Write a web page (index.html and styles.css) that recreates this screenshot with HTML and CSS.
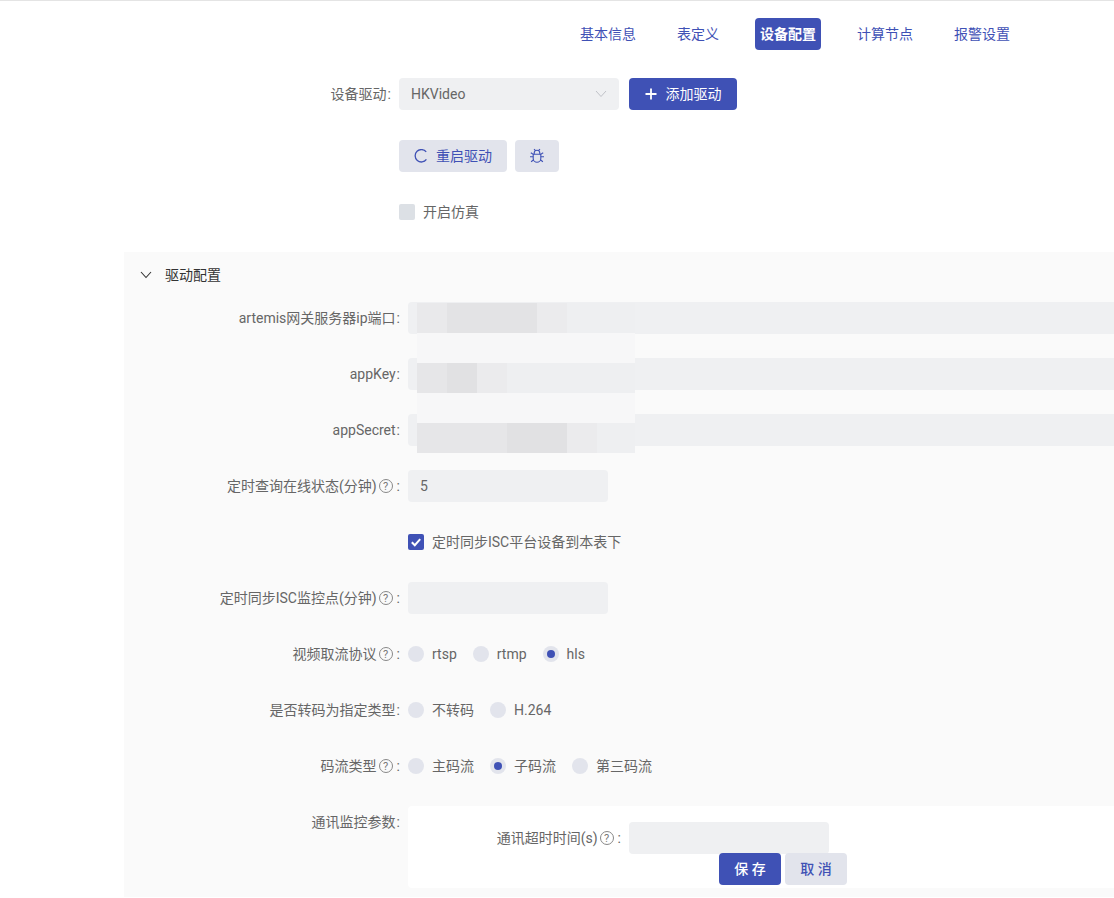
FILE: index.html
```html
<!DOCTYPE html>
<html lang="zh-CN">
<head>
<meta charset="utf-8">
<title>设备配置</title>
<link rel="stylesheet" href="styles.css">
</head>
<body>
<div class="page">
  <nav class="tabs">
    <a class="tab">基本信息</a>
    <a class="tab">表定义</a>
    <a class="tab active">设备配置</a>
    <a class="tab">计算节点</a>
    <a class="tab">报警设置</a>
  </nav>

  <form class="top-form">
    <div class="row row-first">
      <label class="label">设备驱动<span class="colon-plain">:</span></label>
      <div class="control">
        <div class="select">
          <span>HKVideo</span>
          <svg class="select-arrow" viewBox="0 0 12 8" width="12" height="8"><path d="M1 1l5 5.5L11 1" fill="none" stroke="#c0c2c8" stroke-width="1"/></svg>
        </div>
        <button type="button" class="btn btn-primary btn-add">
          <svg viewBox="0 0 12 12" width="12" height="12"><path d="M6 .5v11M.5 6h11" stroke="#fff" stroke-width="1.8" fill="none"/></svg>
          <span>添加驱动</span>
        </button>
      </div>
    </div>
    <div class="row">
      <span class="label"></span>
      <div class="control control-tight">
        <button type="button" class="btn btn-light btn-restart">
          <svg viewBox="0 0 14 14" width="14" height="14"><path d="M12.2 2.9A6.2 6.2 0 1 0 12.4 10.4" fill="none" stroke="#3f51b5" stroke-width="1.3"/></svg>
          <span>重启驱动</span>
        </button>
        <button type="button" class="btn btn-light btn-bug">
          <svg viewBox="0 0 16 16" width="16" height="16" fill="none" stroke="#3f51b5" stroke-width="1.1"><path d="M4.2 6.2h7.6v4.2a3.8 3.8 0 0 1-7.6 0z"/><path d="M5.2 6.2V5a2.8 2.8 0 0 1 5.6 0v1.2"/><path d="M5 1.2l1.6 1.5M11 1.2L9.4 2.7M4.2 8.8H1M11.8 8.8H15M4.4 6.4L1.8 4.8M11.6 6.4l2.6-1.6M4.7 11.8l-2.6 2M11.3 11.8l2.6 2"/></svg>
        </button>
      </div>
    </div>
    <div class="row">
      <span class="label"></span>
      <div class="control">
        <span class="check"></span>
        <span class="check-text">开启仿真</span>
      </div>
    </div>
  </form>

  <section class="panel">
    <header class="panel-head">
      <svg viewBox="0 0 12 8" width="12" height="8"><path d="M1 1l5 5.5L11 1" fill="none" stroke="#333" stroke-width="1.1"/></svg>
      <span>驱动配置</span>
    </header>

    <div class="mosaic" aria-hidden="true">
      <div class="m-row"><i class="c w30 s2"></i><i class="c w90 s4"></i><i class="c w30 s1"></i><i class="c w68 s0"></i></div>
      <div class="m-row m-pale"></div>
      <div class="m-row"><i class="c w30 s3"></i><i class="c w30 s5"></i><i class="c w30 s1"></i><i class="c w128 s0"></i></div>
      <div class="m-row m-pale"></div>
      <div class="m-row"><i class="c w90 s3"></i><i class="c w60 s5"></i><i class="c w30 s1"></i><i class="c w38 s0"></i></div>
    </div>

    <div class="row">
      <label class="label">artemis网关服务器ip端口<span class="colon-plain">:</span></label>
      <div class="control"><div class="input input-full"></div></div>
    </div>
    <div class="row">
      <label class="label">appKey<span class="colon-plain">:</span></label>
      <div class="control"><div class="input input-full"></div></div>
    </div>
    <div class="row">
      <label class="label">appSecret<span class="colon-plain">:</span></label>
      <div class="control"><div class="input input-full"></div></div>
    </div>
    <div class="row">
      <label class="label">定时查询在线状态(分钟)<span class="help">?</span><span class="colon">:</span></label>
      <div class="control"><div class="input">5</div></div>
    </div>
    <div class="row">
      <span class="label"></span>
      <div class="control">
        <span class="check checked">
          <svg viewBox="0 0 16 16" width="16" height="16"><path d="M3.8 8.2l3 3 5.4-6" fill="none" stroke="#fff" stroke-width="2"/></svg>
        </span>
        <span class="check-text">定时同步ISC平台设备到本表下</span>
      </div>
    </div>
    <div class="row">
      <label class="label">定时同步ISC监控点(分钟)<span class="help">?</span><span class="colon">:</span></label>
      <div class="control"><div class="input"></div></div>
    </div>
    <div class="row">
      <label class="label">视频取流协议<span class="help">?</span><span class="colon">:</span></label>
      <div class="control radios">
        <span class="radio-item"><span class="radio"></span>rtsp</span>
        <span class="radio-item"><span class="radio"></span>rtmp</span>
        <span class="radio-item"><span class="radio on"></span>hls</span>
      </div>
    </div>
    <div class="row">
      <label class="label">是否转码为指定类型<span class="colon-plain">:</span></label>
      <div class="control radios">
        <span class="radio-item"><span class="radio"></span>不转码</span>
        <span class="radio-item"><span class="radio"></span>H.264</span>
      </div>
    </div>
    <div class="row">
      <label class="label">码流类型<span class="help">?</span><span class="colon">:</span></label>
      <div class="control radios">
        <span class="radio-item"><span class="radio"></span>主码流</span>
        <span class="radio-item"><span class="radio on"></span>子码流</span>
        <span class="radio-item"><span class="radio"></span>第三码流</span>
      </div>
    </div>
    <div class="row row-last">
      <label class="label">通讯监控参数<span class="colon-plain">:</span></label>
      <div class="subform">
        <div class="row row-last">
          <label class="label label-sub">通讯超时时间(s)<span class="help">?</span><span class="colon">:</span></label>
          <div class="control"><div class="input"></div></div>
        </div>
      </div>
    </div>
  </section>

  <div class="actions">
    <button type="button" class="btn btn-primary btn-act">保 存</button>
    <button type="button" class="btn btn-light btn-act">取 消</button>
  </div>
</div>
</body>
</html>
```

FILE: styles.css
```css
* { box-sizing: border-box; }
html, body { margin: 0; padding: 0; height: 100%; overflow: hidden; background: #fff; }
body {
  font-family: Roboto, "Noto Sans CJK SC", sans-serif;
  font-size: 14px;
  line-height: 21px;
  color: #666;
}
.page { position: relative; width: 1114px; height: 898px; border-top: 1px solid #e4e4e4; overflow: hidden; }

.tabs { display: flex; justify-content: flex-end; gap: 31px; padding: 17px 99px 0 0; height: 77px; }
.tab {
  height: 32px; line-height: 32px; padding: 0 5px; border-radius: 4px;
  color: #3f51b5;
}
.tab.active { background: #3f51b5; color: #fff; font-weight: 700; }

.row { display: flex; min-height: 32px; margin-bottom: 24px; }
.row-first { margin-bottom: 30px; }
.row-last { margin-bottom: 0; }
.label {
  display: flex; justify-content: flex-end; align-items: center;
  flex: none; height: 32px; padding-right: 8px; white-space: nowrap;
}
.top-form .label { width: 399px; }
.panel .label { width: 284px; }
.panel .label-sub { width: 221px; }
.control { display: flex; align-items: center; gap: 10px; flex: 1; min-width: 0; height: 32px; }
.control-tight { gap: 8px; }

.select {
  display: flex; align-items: center; justify-content: space-between;
  width: 220px; height: 32px; padding: 0 12px; border-radius: 4px;
  background: #eff0f2;
}
.select-arrow { flex: none; }

.btn {
  display: inline-flex; align-items: center; justify-content: center; gap: 8px;
  height: 32px; padding: 0; border: 0; border-radius: 4px;
  font: inherit;
}
.btn-primary { background: #3f51b5; color: #fff; }
.btn-light { background: #e2e4ec; color: #3f51b5; }
.btn-add { width: 108px; gap: 9px; }
.btn-restart { width: 108px; }
.btn-bug { width: 44px; }

.check { display: inline-flex; flex: none; width: 16px; height: 16px; border-radius: 2px; background: #dce0e5; margin-right: -2px; }
.check.checked { background: #3f51b5; }
.check-text { white-space: nowrap; }

.panel { position: relative; margin-left: 124px; height: 645px; background: #fafafa; }
.panel-head { display: flex; align-items: center; gap: 13px; height: 50px; padding: 0 0 4px 16px; color: #333; }

.input {
  width: 200px; height: 32px; line-height: 32px; padding: 0 12px; border-radius: 4px;
  background: #eff0f2;
}
.input-full { width: 100%; border-radius: 4px 0 0 4px; }

.help {
  display: inline-flex; align-items: center; justify-content: center;
  width: 14px; height: 14px; margin-left: 2px; border: 1px solid #888; border-radius: 50%;
  font-size: 11px; line-height: 1; color: #777;
}
.colon { margin-left: 4px; }
.colon-plain { margin-left: 1px; }

.radios { gap: 16px; }
.radio-item { display: inline-flex; align-items: center; gap: 8px; white-space: nowrap; }
.radio {
  display: inline-flex; align-items: center; justify-content: center;
  width: 16px; height: 16px; border-radius: 50%; background: #e2e4ec;
}
.radio.on::after { content: ""; width: 8px; height: 8px; border-radius: 50%; background: #3f51b5; }

.subform { flex: 1; min-width: 0; height: 82px; padding-top: 16px; background: #fff; border-radius: 4px 0 0 4px; }

.mosaic { position: absolute; left: 293px; top: 51px; width: 218px; height: 150px; }
.m-row { display: flex; height: 30px; }
.m-pale { background: #f7f7f8; }
.c { display: block; height: 30px; }
.w30 { width: 30px; } .w38 { width: 38px; } .w60 { width: 60px; } .w68 { width: 68px; } .w90 { width: 90px; } .w128 { width: 128px; }
.s0 { background: #eeeff1; } .s1 { background: #ebebed; } .s2 { background: #e9e9eb; }
.s3 { background: #e6e6e8; } .s4 { background: #e3e3e5; } .s5 { background: #e1e1e3; }

.actions { position: absolute; left: 719px; top: 852px; display: flex; gap: 4px; }
.btn-act { width: 62px; font-weight: 500; }
```
